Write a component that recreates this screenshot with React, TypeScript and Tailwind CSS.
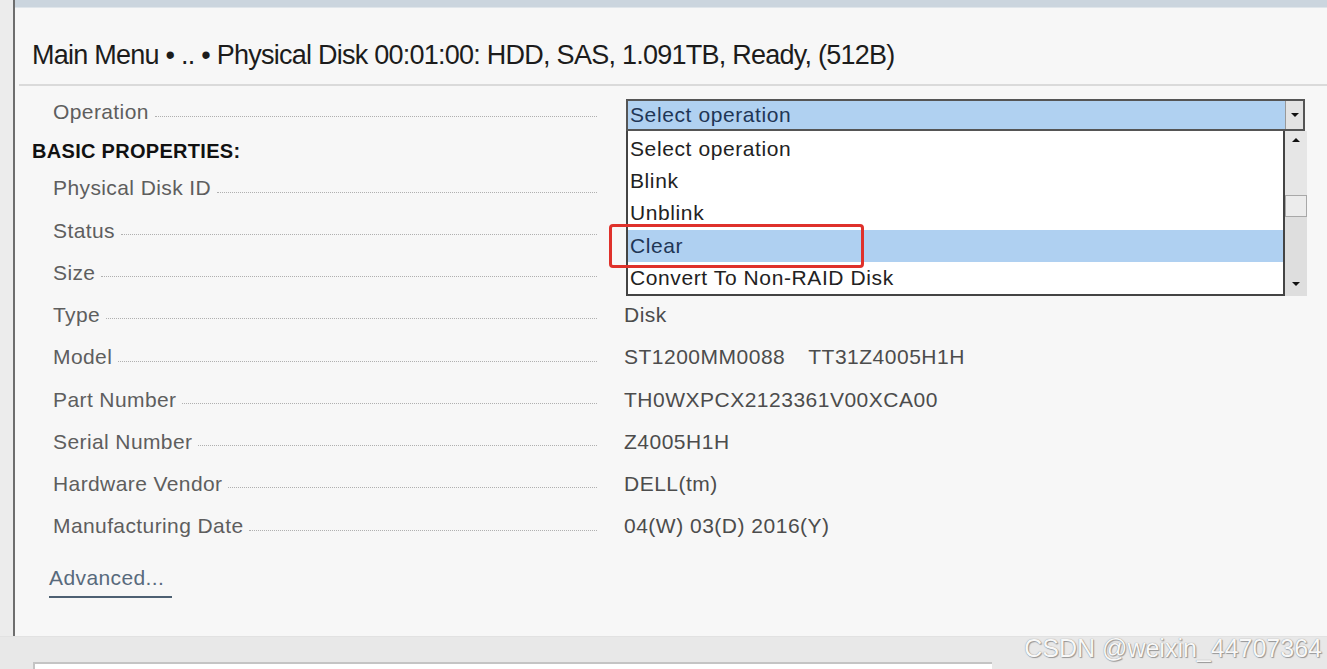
import { ReactNode } from 'react';

const font = { fontFamily: '"Liberation Sans", Arial, sans-serif' };

const rows: [string, ReactNode][] = [
  ['Physical Disk ID', ''],
  ['Status', ''],
  ['Size', ''],
  ['Type', 'Disk'],
  ['Model', <>ST1200MM0088<span className="ml-[23px]">TT31Z4005H1H</span></>],
  ['Part Number', 'TH0WXPCX2123361V00XCA00'],
  ['Serial Number', 'Z4005H1H'],
  ['Hardware Vendor', 'DELL(tm)'],
  ['Manufacturing Date', '04(W) 03(D) 2016(Y)'],
];

const options = ['Select operation', 'Blink', 'Unblink', 'Clear', 'Convert To Non-RAID Disk'];

const Leader = () => (
  <div className="flex-1 ml-[6px] mt-[8px] border-t border-dotted border-[#b0b0b0]" />
);

const Label = ({ text }: { text: string }) => (
  <div className="w-[544px] ml-[21px] flex items-center shrink-0">
    <span className="text-[21px] tracking-[0.4px] text-[#5e5e5e] whitespace-nowrap">{text}</span>
    <Leader />
  </div>
);

const Arrow = ({ up }: { up?: boolean }) => (
  <div
    className={`w-0 h-0 border-l-[4px] border-r-[4px] border-l-transparent border-r-transparent ${
      up ? 'border-b-[4px] border-b-[#111]' : 'border-t-[4px] border-t-[#111]'
    }`}
  />
);

const OperationSelect = () => (
  <div className="relative ml-[29px] mt-[3px] w-[679px] h-[32px] flex border-2 border-[#555] bg-[#b0d1f1]">
    <div className="flex-1 pl-[2px] text-[21px] tracking-[0.6px] leading-[28px] text-[#1f3656] whitespace-nowrap">
      Select operation
    </div>
    <div className="w-[18px] bg-[#e3e3e3] border-l border-[#999] flex items-center justify-center">
      <Arrow />
    </div>

    {/* open list */}
    <div className="absolute left-[-2px] top-[30px] w-[681px] h-[165px] flex z-10">
      <div className="w-[659px] h-full bg-white border-2 border-t-0 border-[#444] pt-[2px]">
        {options.map(o => (
          <div
            key={o}
            className={`h-[32.2px] leading-[32px] pl-[2px] text-[21px] tracking-[0.6px] whitespace-nowrap ${
              o === 'Clear' ? 'bg-[#afd0f1] text-[#1f3656]' : 'text-[#222]'
            }`}
          >
            {o}
          </div>
        ))}
      </div>
      <div className="flex-1 flex flex-col bg-[#dedede]">
        <div className="h-[18px] flex items-center justify-center bg-[#e6e6e6]">
          <Arrow up />
        </div>
        <div className="h-[46px] bg-[#e6e6e6]" />
        <div className="h-[22px] bg-[#ececec] border border-[#a8a8a8]" />
        <div className="flex-1" />
        <div className="h-[24px] flex items-center justify-center">
          <Arrow />
        </div>
      </div>
    </div>
  </div>
);

export default function App() {
  return (
    <div className="relative w-[1327px] h-[669px] overflow-hidden bg-[#ececec] flex flex-col" style={font}>
      <div className="flex h-[636px] shrink-0">
        <div className="w-[13px] bg-[#ececec]" />
        <div className="flex-1 flex flex-col border-l-2 border-[#6e6e6e] bg-[#f7f7f7]">
          <div className="h-[8px] bg-[#cbd5de] border-b border-[#dfe5ea]" />

          {/* title */}
          <div className="h-[76px] pl-[17px] pt-[30px]">
            <h1 className="text-[27px] leading-[34px] tracking-[-0.75px] text-[#1c1c1c] whitespace-nowrap">
              Main Menu • .. • Physical Disk 00:01:00: HDD, SAS, 1.091TB, Ready, (512B)
            </h1>
          </div>
          <div className="ml-[4px] h-[2px] bg-[#dadada]" />

          <div className="pl-[17px]">
            {/* operation */}
            <div className="flex items-start mt-[10px]">
              <div className="h-[32px] flex items-center">
                <Label text="Operation" />
              </div>
              <OperationSelect />
            </div>

            <div className="mt-[8px] h-[24px] leading-[24px] text-[20px] font-bold tracking-[0.3px] text-[#111]">
              BASIC PROPERTIES:
            </div>

            <div className="mt-[4px]">
              {rows.map(([label, value]) => (
                <div key={label} className="flex items-center h-[42.25px]">
                  <Label text={label} />
                  <div className="ml-[27px] text-[21px] tracking-[0.5px] text-[#4c4c4c] whitespace-nowrap">{value}</div>
                </div>
              ))}
            </div>

            <div className="mt-[19px] ml-[17px]">
              <span className="inline-block leading-[24px] text-[21px] tracking-[0.4px] text-[#586a7c] pb-[6px] pr-[8px] border-b-2 border-[#4d6072]">
                Advanced...
              </span>
            </div>
          </div>
        </div>
      </div>

      {/* lower band */}
      <div className="flex-1 overflow-hidden bg-[#e8e8e8] border-t border-[#e2e2e2] pt-[25px] pl-[33px]">
        <div className="w-[959px] h-[20px] bg-white border-t-2 border-l-2 border-[#c4c4c4]" />
      </div>

      {/* annotation */}
      <div className="absolute left-[609px] top-[224px] w-[255px] h-[44px] border-[3px] border-[#df312b] rounded-[4px] z-20" />

      <div className="absolute right-[5px] top-[630px] text-[25px] text-[#f8f8f8] [text-shadow:0_0_1px_#7a7a7a,1px_1px_1px_#9a9a9a] z-20">
        CSDN @weixin_44707364
      </div>
    </div>
  );
}
